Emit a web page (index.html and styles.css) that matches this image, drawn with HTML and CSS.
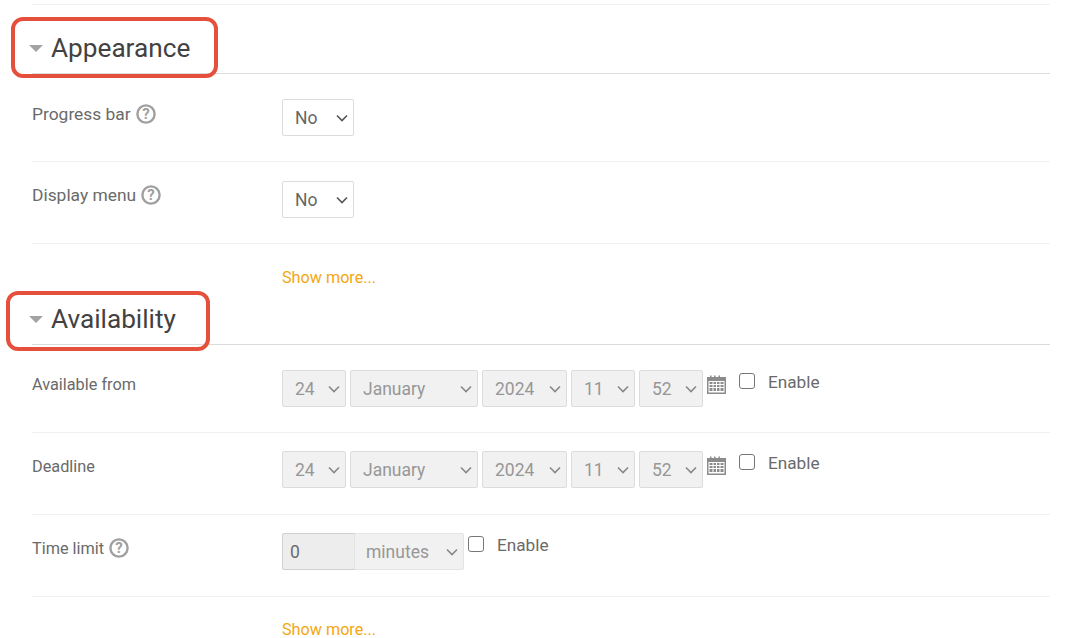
FILE: index.html
```html
<!DOCTYPE html>
<html lang="en">
<head>
<meta charset="utf-8">
<title>Settings</title>
<link rel="stylesheet" href="styles.css">
</head>
<body>
<main class="form">
  <section class="section section-appearance">
    <h2 class="heading"><span class="caret"></span>Appearance</h2>
    <span class="callout callout-appearance"></span>
    <div class="row row-first">
      <div class="label">Progress bar <svg class="help" viewBox="0 0 20 20"><circle cx="10" cy="10" r="8.6"/><text x="10" y="15.200" text-anchor="middle">?</text></svg></div>
      <div class="field"><select class="select sel-no"><option>No</option></select></div>
    </div>
    <div class="row row-even">
      <div class="label label-up">Display menu <svg class="help" viewBox="0 0 20 20"><circle cx="10" cy="10" r="8.6"/><text x="10" y="15.200" text-anchor="middle">?</text></svg></div>
      <div class="field"><select class="select sel-no"><option>No</option></select></div>
    </div>
    <div class="more"><a class="more-link">Show more...</a></div>
  </section>
  <section class="section">
    <h2 class="heading heading-tight"><span class="caret"></span>Availability</h2>
    <span class="callout callout-availability"></span>
    <div class="row row-first">
      <div class="label label-up">Available from</div>
      <div class="field">
        <select class="select sel-day" disabled><option>24</option></select>
        <select class="select sel-month" disabled><option>January</option></select>
        <select class="select sel-year" disabled><option>2024</option></select>
        <select class="select sel-hour" disabled><option>11</option></select>
        <select class="select sel-min" disabled><option>52</option></select>
        <svg class="cal" viewBox="0 0 19 20"><path d="M0 3h3V1.500h1.500V3h2.500V1.500h1.500V3h3V1.500h1.500V3H19v17H0z M1.500 7v11.500h16V7z" fill-rule="evenodd"/><path d="M2.500 8h3v2h-3zM6.500 8h2.500v2H6.500zM10 8h2.500v2H10zM13.500 8h3v2h-3zM2.500 11h3v2h-3zM6.500 11h2.500v2H6.500zM10 11h2.500v2H10zM13.500 11h3v2h-3zM2.500 14h3v3h-3zM6.500 14h2.500v3H6.500zM10 14h2.500v3H10zM13.500 14h3v3h-3z"/></svg>
        <label class="enable"><input class="check" type="checkbox">Enable</label>
      </div>
    </div>
    <div class="row">
      <div class="label">Deadline</div>
      <div class="field">
        <select class="select sel-day" disabled><option>24</option></select>
        <select class="select sel-month" disabled><option>January</option></select>
        <select class="select sel-year" disabled><option>2024</option></select>
        <select class="select sel-hour" disabled><option>11</option></select>
        <select class="select sel-min" disabled><option>52</option></select>
        <svg class="cal" viewBox="0 0 19 20"><path d="M0 3h3V1.500h1.500V3h2.500V1.500h1.500V3h3V1.500h1.500V3H19v17H0z M1.500 7v11.500h16V7z" fill-rule="evenodd"/><path d="M2.500 8h3v2h-3zM6.500 8h2.500v2H6.500zM10 8h2.500v2H10zM13.500 8h3v2h-3zM2.500 11h3v2h-3zM6.500 11h2.500v2H6.500zM10 11h2.500v2H10zM13.500 11h3v2h-3zM2.500 14h3v3h-3zM6.500 14h2.500v3H6.500zM10 14h2.500v3H10zM13.500 14h3v3h-3z"/></svg>
        <label class="enable"><input class="check" type="checkbox">Enable</label>
      </div>
    </div>
    <div class="row">
      <div class="label">Time limit <svg class="help" viewBox="0 0 20 20"><circle cx="10" cy="10" r="8.6"/><text x="10" y="15.200" text-anchor="middle">?</text></svg></div>
      <div class="field">
        <input class="number" type="text" value="0" disabled>
        <select class="select sel-unit" disabled><option>minutes</option></select>
        <label class="enable enable-near"><input class="check" type="checkbox">Enable</label>
      </div>
    </div>
    <div class="more"><a class="more-link">Show more...</a></div>
  </section>
</main>
</body>
</html>
```

FILE: styles.css
```css
* { box-sizing: border-box; }
html, body { margin: 0; height: 638px; overflow: hidden; background: #fff; }
body { font-family: Roboto, "Liberation Sans", sans-serif; color: #5f5f5f; font-size: 16px; }
.form { margin: 4px 23px 0 32px; border-top: 1px solid #f1f1f1; }
.section { position: relative; }
.heading {
  display: flex; align-items: center; height: 69px; margin: 0; padding-top: 18px;
  border-bottom: 1px solid #dcdcdc;
  font-size: 26.200px; font-weight: 400; color: #424242; line-height: 1;
}
.heading-tight { height: 57px; padding-top: 6px; }
.caret {
  width: 0; height: 0; margin: 1px 8px 0 -3px;
  border-left: 7.500px solid transparent; border-right: 7.500px solid transparent;
  border-top: 7.500px solid #a3a3a3;
}
.callout { position: absolute; border: 4px solid #e5503c; border-radius: 12px; pointer-events: none; }
.callout-appearance { left: -21px; top: 12px; width: 207px; height: 61px; }
.callout-availability { left: -26px; top: 3px; width: 204px; height: 60px; }
.row { display: flex; height: 82px; padding-top: 18px; border-bottom: 1px solid #f1f1f1; }
.row-first { height: 88px; padding-top: 25px; }
.row-even { padding-top: 19px; }
.label { display: flex; align-items: center; gap: 5px; width: 250px; height: 20px; margin-top: 5px; font-size: 16.300px; color: #6a6a6a; }
.label-up { margin-top: 4px; }
.section-appearance .label { font-size: 17.400px; }
.help { width: 20px; height: 20px; flex: none; }
.help circle { fill: none; stroke: #a0a0a0; stroke-width: 2.400; }
.help text { font-family: Roboto, sans-serif; font-size: 15px; font-weight: 700; fill: #a0a0a0; }
.field { display: flex; align-items: flex-start; gap: 4px; }
.select {
  height: 37px; padding: 0 12px; border: 1px solid #dcdcdc; border-radius: 2px;
  appearance: none;
  font-family: inherit; font-size: 17.500px; color: #666;
  background: #fff url("data:image/svg+xml,%3Csvg xmlns='http://www.w3.org/2000/svg' width='12' height='8' viewBox='0 0 12 8'%3E%3Cpath d='M1 1.500l5 5 5-5' fill='none' stroke='%23555' stroke-width='1.600'/%3E%3C/svg%3E") no-repeat right 5px center;
}
.select:disabled {
  color: #979797; opacity: 1;
  background: #f1f1f1 url("data:image/svg+xml,%3Csvg xmlns='http://www.w3.org/2000/svg' width='12' height='8' viewBox='0 0 12 8'%3E%3Cpath d='M1 1.500l5 5 5-5' fill='none' stroke='%23888' stroke-width='1.600'/%3E%3C/svg%3E") no-repeat right 5px center;
}
.sel-no { width: 72px; }
.sel-day { width: 64px; }
.sel-month { width: 128px; }
.sel-year { width: 85px; }
.sel-hour { width: 64px; }
.sel-min { width: 64px; }
.sel-unit { width: 110px; margin-left: -5px; border-color: #e4e4e4; padding-left: 11px; }
.number {
  width: 73px; height: 37px; padding: 0 7px; border: 1px solid #d0d0d0; border-radius: 2px 0 0 2px;
  font-family: inherit; font-size: 17.500px; color: #6a6a6a; background: #ededed;
}
.cal { width: 19px; height: 20px; margin: 4px 0 0 0; fill: #8c8c8c; }
.enable { display: flex; align-items: flex-start; line-height: 22px; font-size: 17.200px; color: #6a6a6a; margin-left: 9px; padding-top: 1px; }
.enable-near { margin-left: 0; }
.check { width: 15.500px; height: 15.500px; margin: 2px 13.500px 0 0; appearance: none; border: 1px solid #767676; border-radius: 3px; background: #fff; }
.more { height: 44px; padding: 23px 0 0 250px; }
.section-appearance .more { padding-top: 24px; }
.more-link { color: #f5a70f; font-size: 16.200px; line-height: 20px; }
```
